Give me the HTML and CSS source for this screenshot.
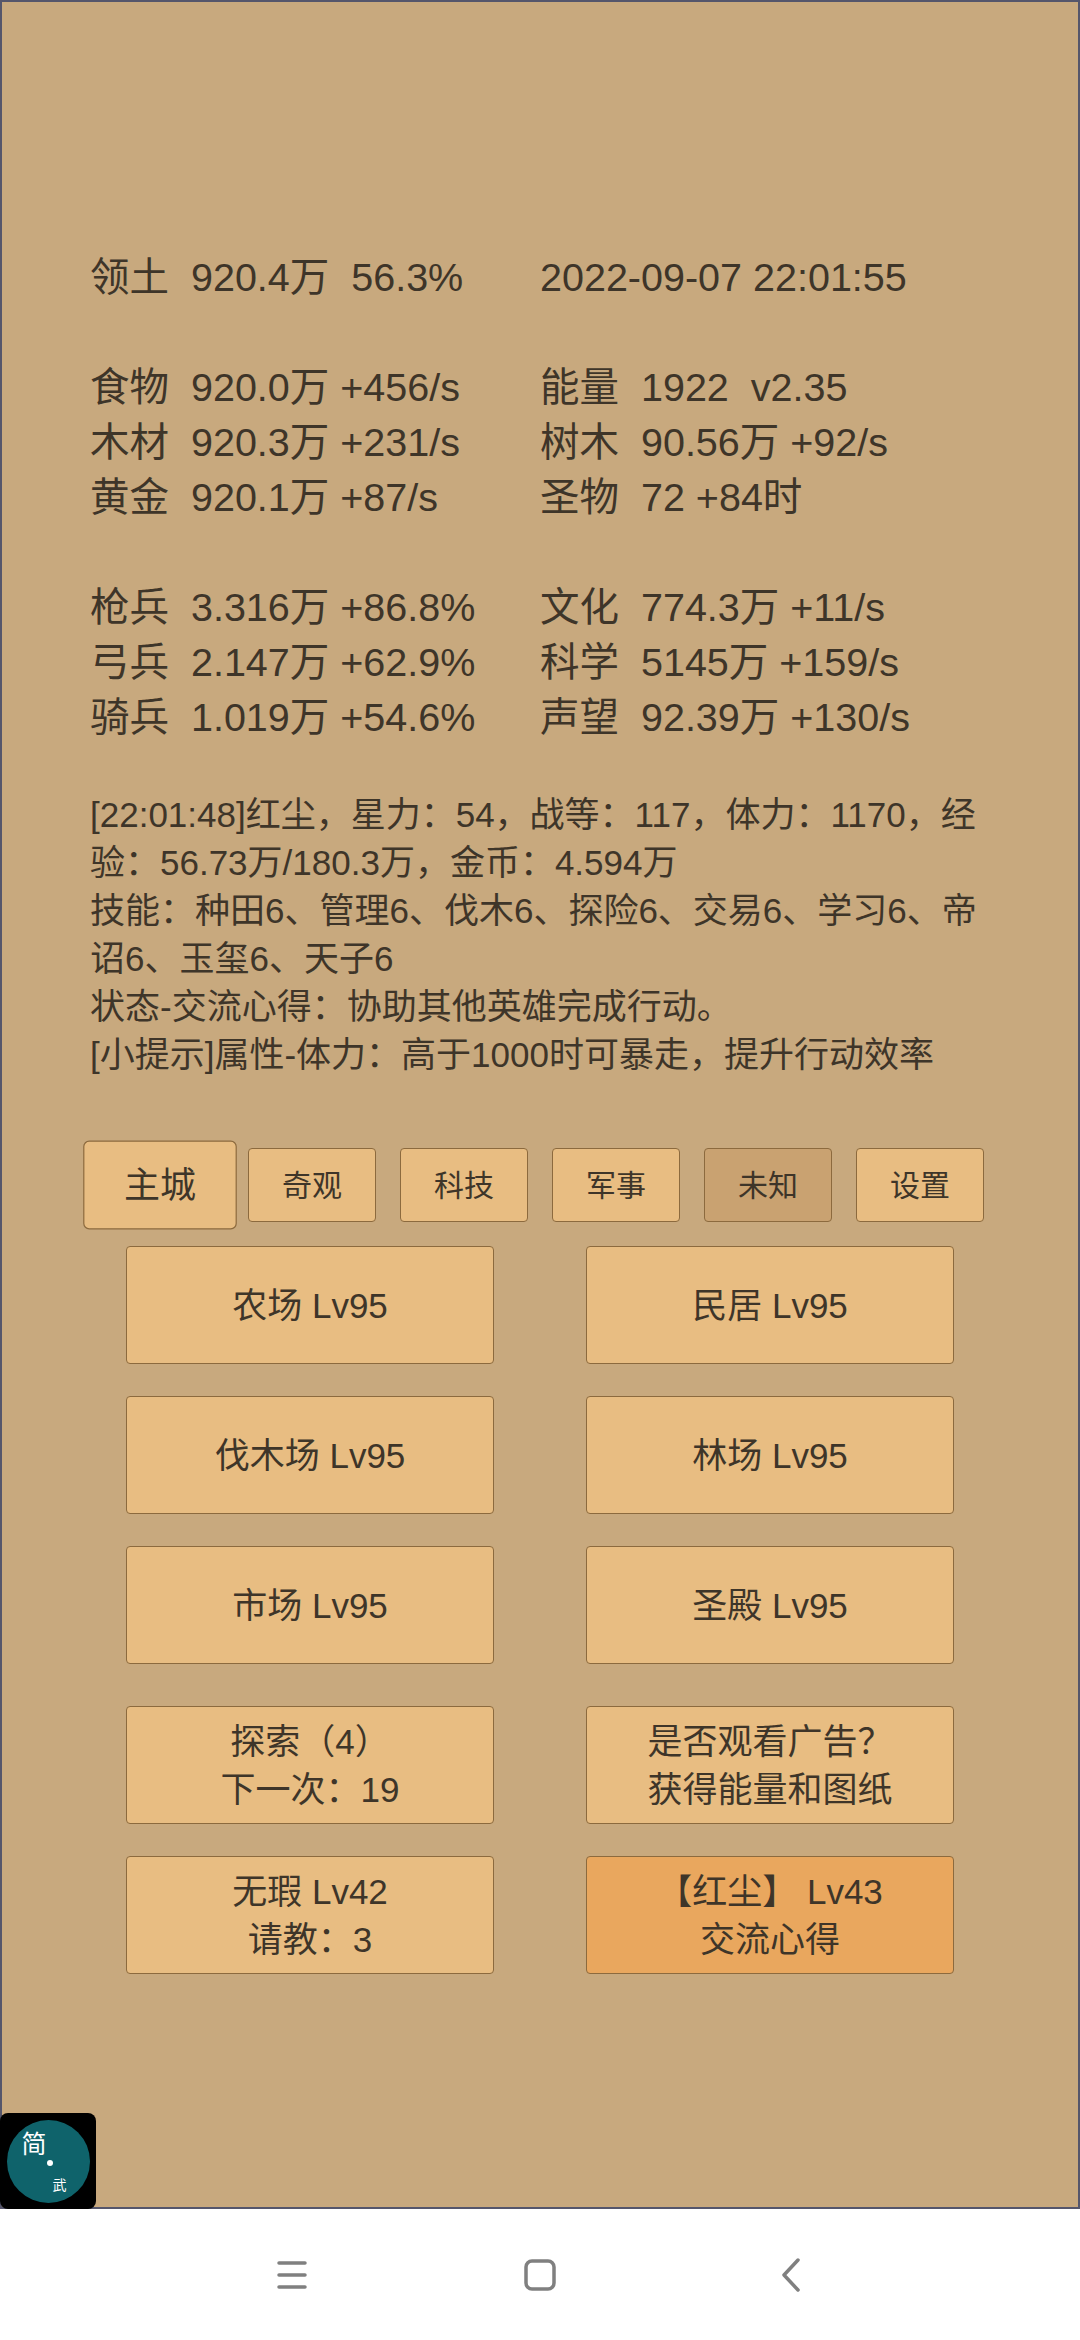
FILE: index.html
```html
<!DOCTYPE html>
<html lang="zh-CN">
    <head>
        <title>简武</title>
        <meta charset="UTF-8" />
        <meta name="viewport" content="width=device-width, initial-scale=1" />
        <link rel="stylesheet" href="styles.css">
    </head>
    <body>
        <div class="game">
            <div class="stats">
                <div class="col">
                    <p>领土  920.4万  56.3%</p>
                    <p>&nbsp;</p>
                    <p>食物  920.0万 +456/s</p>
                    <p>木材  920.3万 +231/s</p>
                    <p>黄金  920.1万 +87/s</p>
                    <p>&nbsp;</p>
                    <p>枪兵  3.316万 +86.8%</p>
                    <p>弓兵  2.147万 +62.9%</p>
                    <p>骑兵  1.019万 +54.6%</p>
                </div>
                <div class="col">
                    <p>2022-09-07 22:01:55</p>
                    <p>&nbsp;</p>
                    <p>能量  1922  v2.35</p>
                    <p>树木  90.56万 +92/s</p>
                    <p>圣物  72 +84时</p>
                    <p>&nbsp;</p>
                    <p>文化  774.3万 +11/s</p>
                    <p>科学  5145万 +159/s</p>
                    <p>声望  92.39万 +130/s</p>
                </div>
            </div>
            <div class="log">
                <p>[22:01:48]红尘，星力：54，战等：117，体力：1170，经验：56.73万/180.3万，金币：4.594万</p>
                <p>技能：种田6、管理6、伐木6、探险6、交易6、学习6、帝诏6、玉玺6、天子6</p>
                <p>状态-交流心得：协助其他英雄完成行动。</p>
                <p>[小提示]属性-体力：高于1000时可暴走，提升行动效率</p>
            </div>
            <div class="tabs">
                <button class="tab active">主城</button>
                <button class="tab">奇观</button>
                <button class="tab">科技</button>
                <button class="tab">军事</button>
                <button class="tab dim">未知</button>
                <button class="tab">设置</button>
            </div>
            <div class="grid">
                <button class="btn">农场 Lv95</button>
                <button class="btn">民居 Lv95</button>
                <button class="btn">伐木场 Lv95</button>
                <button class="btn">林场 Lv95</button>
                <button class="btn">市场 Lv95</button>
                <button class="btn">圣殿 Lv95</button>
            </div>
            <div class="grid lower">
                <button class="btn">探索（4）<br>下一次：19</button>
                <button class="btn">是否观看广告？<br>获得能量和图纸</button>
                <button class="btn">无瑕 Lv42<br>请教：3</button>
                <button class="btn hot">【红尘】 Lv43<br>交流心得</button>
            </div>
            <div class="logo">
                <div class="logo-disc">
                    <span class="logo-big">简</span>
                    <span class="logo-dot"></span>
                    <span class="logo-small">武</span>
                </div>
            </div>
        </div>
        <div class="navbar">
            <div class="nav-cell">
                <svg width="30" height="28" viewBox="0 0 30 28">
                    <path d="M2 2H28M2 14H28M2 26H28" fill="none" stroke="#808080" stroke-width="3.500" stroke-linecap="round" />
                </svg>
            </div>
            <div class="nav-cell">
                <svg width="32" height="32" viewBox="0 0 32 32">
                    <rect x="2" y="2" width="28" height="28" rx="6" fill="none" stroke="#808080" stroke-width="3.500" />
                </svg>
            </div>
            <div class="nav-cell">
                <svg width="24" height="34" viewBox="0 0 24 34">
                    <path d="M22 2L8 17L22 32" fill="none" stroke="#808080" stroke-width="3.500" stroke-linecap="round" stroke-linejoin="round" />
                </svg>
            </div>
        </div>
    </body>
</html>
```

FILE: styles.css
```css
* {
    box-sizing: border-box;
}
body {
    font-family: "Liberation Sans", "Noto Sans CJK SC", sans-serif;
    margin: 0;
    padding: 0;
    overflow: hidden;
    width: 1080px;
    height: 2340px;
    background-color: #fff;
    color: #3e3529;
}
p {
    margin: 0;
}
.game {
    position: relative;
    height: 2209px;
    padding: 248px 0 0 88px;
    background-color: #c8a97e;
    border: 2px solid #55566b;
}
.stats {
    display: flex;
    font-size: 39.5px;
    line-height: 55px;
}
.col {
    width: 450px;
}
.col p {
    white-space: pre;
}
.log {
    width: 900px;
    margin-top: 46px;
    font-size: 35px;
    line-height: 48px;
}
.tabs {
    display: flex;
    gap: 24px;
    margin: 69px 0 0 6px;
}
button {
    font-family: inherit;
    color: inherit;
    padding: 0;
    background-color: #e8bd82;
    border: 1px solid #8c6a3e;
    border-radius: 4px;
}
.tab {
    width: 128px;
    height: 74px;
    padding-bottom: 5px;
    font-size: 30px;
}
.tab.active {
    transform: scale(1.2);
    border-radius: 5px;
}
.tab.dim {
    background-color: #c9a271;
}
.grid {
    display: grid;
    grid-template-columns: 368px 368px;
    grid-auto-rows: 118px;
    column-gap: 92px;
    row-gap: 32px;
    margin: 24px 0 0 36px;
}
.grid.lower {
    margin-top: 42px;
}
.btn {
    padding-top: 2px;
    font-size: 35px;
    line-height: 48px;
}
.btn.hot {
    background-color: #e9a75e;
}
.logo {
    position: absolute;
    left: -2px;
    bottom: -2px;
    display: flex;
    align-items: center;
    justify-content: center;
    width: 96px;
    height: 96px;
    background-color: #000;
    border-radius: 8px;
}
.logo-disc {
    position: relative;
    width: 83px;
    height: 83px;
    border-radius: 50%;
    background-color: #0f636b;
    color: #fff;
}
.logo-big {
    position: absolute;
    left: 15px;
    top: 10px;
    font-size: 25px;
    line-height: 28px;
}
.logo-dot {
    position: absolute;
    left: 40px;
    top: 40px;
    width: 6px;
    height: 6px;
    border-radius: 50%;
    background-color: #fff;
}
.logo-small {
    position: absolute;
    left: 46px;
    top: 57px;
    font-size: 14px;
    line-height: 16px;
}
.navbar {
    display: flex;
    align-items: center;
    justify-content: center;
    height: 131px;
}
.nav-cell {
    display: flex;
    justify-content: center;
    width: 248px;
}
```
